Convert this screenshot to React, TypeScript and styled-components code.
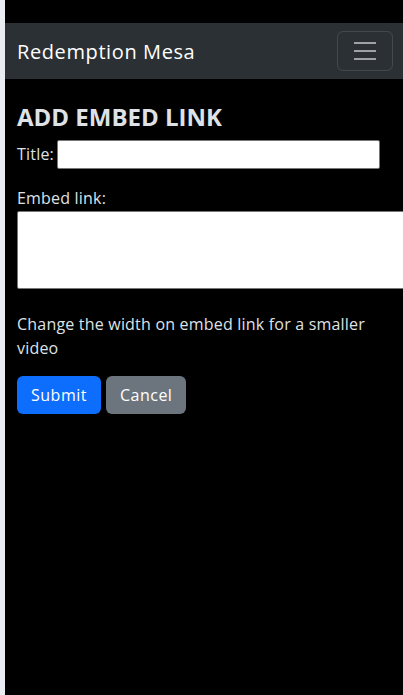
import React from "react";
import styled, { createGlobalStyle } from "styled-components";

const Global = createGlobalStyle`
  html, body { margin: 0; padding: 0; background: #000; }
  body { font-family: "Open Sans", "Liberation Sans", sans-serif; color: #dee2e6; letter-spacing: 0.2px; }
  * { box-sizing: border-box; }
`;

const Page = styled.div`
  display: flex;
  min-height: 695px;
  overflow: hidden;
`;

const Strip = styled.div`
  width: 5px;
  flex: none;
  background: #e9edf2;
`;

const Main = styled.div`
  flex: 1;
  min-width: 0;
  background: #000;
  padding-top: 23px;
  overflow: hidden;
`;

const Navbar = styled.nav`
  height: 56px;
  background: #2b3035;
  display: flex;
  align-items: center;
  justify-content: space-between;
  padding: 0 10px 0 12px;
`;

const Brand = styled.a`
  font-size: 20px;
  letter-spacing: 0.6px;
  color: #fff;
  text-decoration: none;
`;

const Toggler = styled.button`
  width: 56px;
  height: 40px;
  border: 1px solid rgba(255, 255, 255, 0.12);
  border-radius: 6px;
  background: transparent;
  display: flex;
  align-items: center;
  justify-content: center;
  padding: 0;
`;

const Content = styled.main`
  padding: 0 12px;
`;

const Heading = styled.h2`
  margin: 24px 0 0;
  font-size: 24px;
  font-weight: 700;
  line-height: 1.2;
  letter-spacing: 0;
  color: #dee2e6;
`;

const Row = styled.div`
  display: flex;
  align-items: center;
  gap: 3px;
  margin-top: 8px;
`;

const Label = styled.label`
  font-size: 16px;
  line-height: 24px;
`;

const TitleInput = styled.input`
  width: 323px;
  height: 29px;
  border: 1px solid #767676;
  border-radius: 2px;
  background: #fff;
`;

const Field = styled.div`
  margin-top: 17px;
  display: flex;
  flex-direction: column;
  align-items: flex-start;
`;

const TextArea = styled.textarea`
  width: 400px;
  height: 78px;
  border: 1px solid #767676;
  border-radius: 2px;
  background: #fff;
  resize: none;
  margin-top: 1px;
`;

const Note = styled.p`
  margin: 23px 0 0;
  font-size: 16px;
  line-height: 24px;
`;

const Actions = styled.div`
  display: flex;
  gap: 5px;
  margin-top: 16px;
`;

const Button = styled.button<{ $variant: "primary" | "secondary" }>`
  height: 38px;
  padding: 0 14px;
  border: none;
  border-radius: 6px;
  font-family: inherit;
  font-size: 16px;
  letter-spacing: 0.5px;
  color: #fff;
  background: ${(p) => (p.$variant === "primary" ? "#0d6efd" : "#6c757d")};
`;

export default function App() {
  return (
    <>
      <Global />
      <Page>
        <Strip />
        <Main>
          <Navbar>
            <Brand href="#">Redemption Mesa</Brand>
            <Toggler aria-label="Toggle navigation">
              <svg width="30" height="30" viewBox="0 0 30 30">
                <path
                  d="M4 7h22M4 15h22M4 23h22"
                  stroke="rgba(255,255,255,0.55)"
                  strokeWidth="2"
                  strokeLinecap="butt"
                />
              </svg>
            </Toggler>
          </Navbar>
          <Content>
            <Heading>ADD EMBED LINK</Heading>
            <Row>
              <Label htmlFor="title">Title:</Label>
              <TitleInput id="title" type="text" />
            </Row>
            <Field>
              <Label htmlFor="embed">Embed link:</Label>
              <TextArea id="embed" />
            </Field>
            <Note>Change the width on embed link for a smaller video</Note>
            <Actions>
              <Button $variant="primary">Submit</Button>
              <Button $variant="secondary">Cancel</Button>
            </Actions>
          </Content>
        </Main>
      </Page>
    </>
  );
}
